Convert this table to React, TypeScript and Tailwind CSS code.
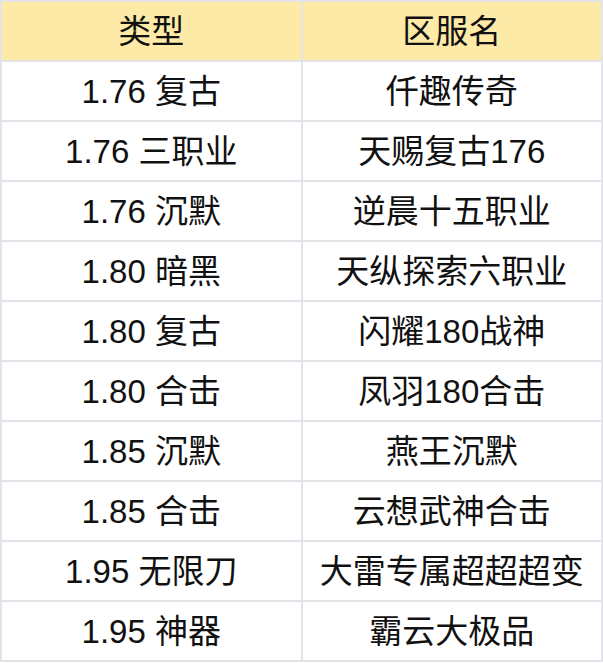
import React from "react";

const rows: [string, string][] = [
  ["1.76 复古", "仟趣传奇"],
  ["1.76 三职业", "天赐复古176"],
  ["1.76 沉默", "逆晨十五职业"],
  ["1.80 暗黑", "天纵探索六职业"],
  ["1.80 复古", "闪耀180战神"],
  ["1.80 合击", "凤羽180合击"],
  ["1.85 沉默", "燕王沉默"],
  ["1.85 合击", "云想武神合击"],
  ["1.95 无限刀", "大雷专属超超超变"],
  ["1.95 神器", "霸云大极品"],
];

export default function App() {
  return (
    <div
      className="w-[603px] h-[663px] bg-white"
      style={{ fontFamily: '"Liberation Sans", "Noto Sans CJK SC", sans-serif' }}
    >
      <div className="grid grid-cols-2 gap-[2px] p-[2px] bg-[#e2e4e9] text-[33px] leading-none text-[#111]">
        <div className="h-[58px] flex items-center justify-center bg-[#feeaa7]">类型</div>
        <div className="h-[58px] flex items-center justify-center bg-[#feeaa7]">区服名</div>
        {rows.map(([a, b]) => (
          <React.Fragment key={a + b}>
            <div className="h-[58px] flex items-center justify-center bg-white">{a}</div>
            <div className="h-[58px] flex items-center justify-center bg-white">{b}</div>
          </React.Fragment>
        ))}
      </div>
    </div>
  );
}
